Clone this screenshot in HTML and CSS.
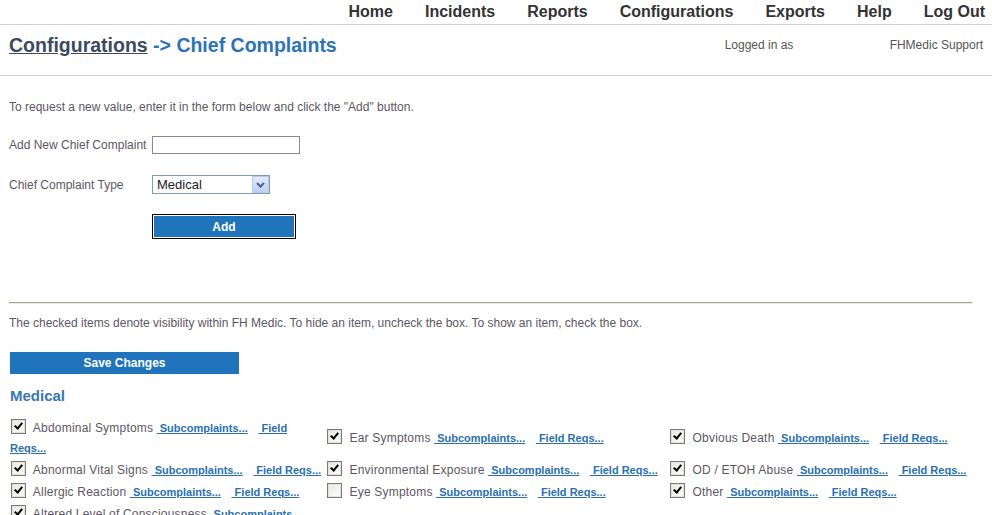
FILE: index.html
```html
<!DOCTYPE html>
<html lang="en">
<head>
  <meta charset="UTF-8">
  <title>FH Medic - Chief Complaints</title>
  <link rel="stylesheet" href="styles.css">
</head>
<body>

<nav class="topnav">
  <a href="#">Home</a>
  <a href="#">Incidents</a>
  <a href="#">Reports</a>
  <a href="#">Configurations</a>
  <a href="#">Exports</a>
  <a href="#">Help</a>
  <a href="#">Log Out</a>
</nav>

<div class="titlebar">
  <h1><a href="#" class="crumb">Configurations</a> <span class="arrow">-&gt; Chief Complaints</span></h1>
  <div class="login">
    <span class="login-label">Logged in as</span>
    <span class="login-user">FHMedic Support</span>
  </div>
</div>

<div class="content">
  <p class="intro">To request a new value, enter it in the form below and click the "Add" button.</p>

  <form class="add-form">
    <label for="newCc">Add New Chief Complaint</label>
    <input type="text" id="newCc" class="txt">

    <label for="ccType" class="type-label">Chief Complaint Type</label>
    <div class="select-wrap">
      <select id="ccType">
        <option>Medical</option>
        <option>Trauma</option>
      </select>
      <span class="select-btn">
        <svg width="9" height="6" viewBox="0 0 9 6"><path d="M1 1 L4.5 4.5 L8 1" fill="none" stroke="#4d6185" stroke-width="2"/></svg>
      </span>
    </div>

    <span></span>
    <button type="button" class="add-btn">Add</button>
  </form>

  <hr class="divider">

  <p class="note">The checked items denote visibility within FH Medic. To hide an item, uncheck the box. To show an item, check the box.</p>

  <button type="button" class="save-btn">Save Changes</button>

  <h2 class="group">Medical</h2>

  <div class="cc-grid">
    <div class="cc"><span class="cb on"></span> Abdominal Symptoms <a href="#">&nbsp;Subcomplaints...</a> &nbsp; <a href="#">&nbsp;Field Reqs...</a></div>
    <div class="cc"><span class="cb on"></span> Ear Symptoms <a href="#">&nbsp;Subcomplaints...</a> &nbsp; <a href="#">&nbsp;Field Reqs...</a></div>
    <div class="cc"><span class="cb on"></span> Obvious Death <a href="#">&nbsp;Subcomplaints...</a> &nbsp; <a href="#">&nbsp;Field Reqs...</a></div>

    <div class="cc"><span class="cb on"></span> Abnormal Vital Signs <a href="#">&nbsp;Subcomplaints...</a> &nbsp; <a href="#">&nbsp;Field Reqs...</a></div>
    <div class="cc"><span class="cb on"></span> Environmental Exposure <a href="#">&nbsp;Subcomplaints...</a> &nbsp; <a href="#">&nbsp;Field Reqs...</a></div>
    <div class="cc"><span class="cb on"></span> OD / ETOH Abuse <a href="#">&nbsp;Subcomplaints...</a> &nbsp; <a href="#">&nbsp;Field Reqs...</a></div>

    <div class="cc"><span class="cb on"></span> Allergic Reaction <a href="#">&nbsp;Subcomplaints...</a> &nbsp; <a href="#">&nbsp;Field Reqs...</a></div>
    <div class="cc"><span class="cb"></span> Eye Symptoms <a href="#">&nbsp;Subcomplaints...</a> &nbsp; <a href="#">&nbsp;Field Reqs...</a></div>
    <div class="cc"><span class="cb on"></span> Other <a href="#">&nbsp;Subcomplaints...</a> &nbsp; <a href="#">&nbsp;Field Reqs...</a></div>

    <div class="cc"><span class="cb on"></span> Altered Level of Consciousness <a href="#">&nbsp;Subcomplaints...</a> &nbsp; <a href="#">&nbsp;Field Reqs...</a></div>
    <div class="cc"><span class="cb"></span> Fever <a href="#">&nbsp;Subcomplaints...</a> &nbsp; <a href="#">&nbsp;Field Reqs...</a></div>
    <div class="cc"><span class="cb on"></span> Pain <a href="#">&nbsp;Subcomplaints...</a> &nbsp; <a href="#">&nbsp;Field Reqs...</a></div>
  </div>
</div>

</body>
</html>
```

FILE: styles.css
```css
body {
  margin: 0;
  padding: 0;
  font-family: "Liberation Sans", Arial, sans-serif;
  font-size: 12px;
  color: #5d5763;
  background-color: #fff;
}
.topnav {
  display: flex;
  justify-content: flex-end;
  height: 24px;
  padding-right: 7px;
  border-bottom: 1px solid #cfcfcf;
}
.topnav a {
  padding: 0 16px;
  line-height: 23px;
  font-size: 16px;
  font-weight: bold;
  color: #333;
  text-decoration: none;
}
.topnav a:last-child {
  padding-right: 0;
}
.titlebar {
  display: flex;
  align-items: flex-start;
  height: 50px;
  padding: 0 9px;
  border-bottom: 1px solid #cfcfcf;
}
.titlebar h1 {
  flex: 1;
  margin: 8px 0 0 0;
  line-height: 24px;
  font-size: 19.5px;
  font-weight: bold;
  color: #2b73b4;
}
.crumb {
  color: #3b4a5e;
  text-decoration: underline;
}
.login {
  display: flex;
  padding-top: 13px;
  color: #555;
}
.login-label {
  width: 165px;
}
.content {
  padding: 0 20px 0 9px;
}
.intro {
  margin: 24px 0 0 0;
}
.add-form {
  display: grid;
  grid-template-columns: 143px auto;
  justify-items: start;
  align-items: center;
  margin-top: 22px;
  row-gap: 21px;
}
.txt {
  width: 148px;
  height: 18px;
  box-sizing: border-box;
  margin: 0;
  border: 1px solid #8a8a8a;
  font-size: 12px;
}
.select-wrap {
  position: relative;
  width: 118px;
  height: 19px;
}
.select-wrap select {
  appearance: none;
  width: 100%;
  height: 100%;
  margin: 0;
  padding: 0 0 0 4px;
  border: 1px solid #7f9db9;
  border-radius: 0;
  background: #fff;
  font-family: "Liberation Sans", Arial, sans-serif;
  font-size: 13px;
  color: #222;
}
.select-btn {
  position: absolute;
  top: 1px;
  right: 1px;
  width: 15px;
  height: 15px;
  display: flex;
  align-items: center;
  justify-content: center;
  border: 1px solid #bccbeb;
  background: linear-gradient(#e3ebfc, #bccff5);
  pointer-events: none;
}
.add-btn {
  width: 144px;
  height: 25px;
  margin-top: -1px;
  border: 1px solid #000;
  box-shadow: inset 0 0 0 1px #fff;
  background-color: #1f74bb;
  color: #fff;
  font-family: "Liberation Sans", Arial, sans-serif;
  font-size: 12px;
  font-weight: bold;
  cursor: pointer;
}
.divider {
  margin: 63px 0 0 0;
  height: 0;
  border: none;
  border-top: 1px solid #a5a292;
  border-bottom: 1px solid #ebeae0;
}
.note {
  margin: 12px 0 0 0;
}
.save-btn {
  display: block;
  width: 229px;
  height: 22px;
  margin: 22px 0 0 1px;
  border: none;
  background-color: #1f74bb;
  color: #fff;
  font-family: "Liberation Sans", Arial, sans-serif;
  font-size: 12px;
  font-weight: bold;
  cursor: pointer;
}
.group {
  margin: 13px 0 0 1px;
  font-size: 15px;
  font-weight: bold;
  color: #3a76b0;
}
.cc-grid {
  display: grid;
  grid-template-columns: 316px 343px 1fr;
  align-items: center;
  margin: 12px 0 0 1px;
}
.cc {
  line-height: 20px;
  letter-spacing: 0.2px;
}
.cc:nth-child(3n+1) {
  padding-right: 3px;
}
.cc a {
  font-size: 11px;
  font-weight: bold;
  letter-spacing: 0;
  color: #2a6fb0;
  text-decoration: underline;
}
.cb {
  display: inline-block;
  position: relative;
  width: 13px;
  height: 13px;
  margin: 3px 4px 0 1px;
  vertical-align: -2px;
  border: 1px solid #7b7b7b;
  box-shadow: inset 0 0 0 1px #e4e2da;
  background: linear-gradient(135deg, #e9e8e2, #fdfdfb);
}
.cb.on::after {
  content: "";
  position: absolute;
  left: 4px;
  top: 1px;
  width: 3px;
  height: 6px;
  border-right: 2px solid #000;
  border-bottom: 2px solid #000;
  transform: rotate(40deg);
}
```
